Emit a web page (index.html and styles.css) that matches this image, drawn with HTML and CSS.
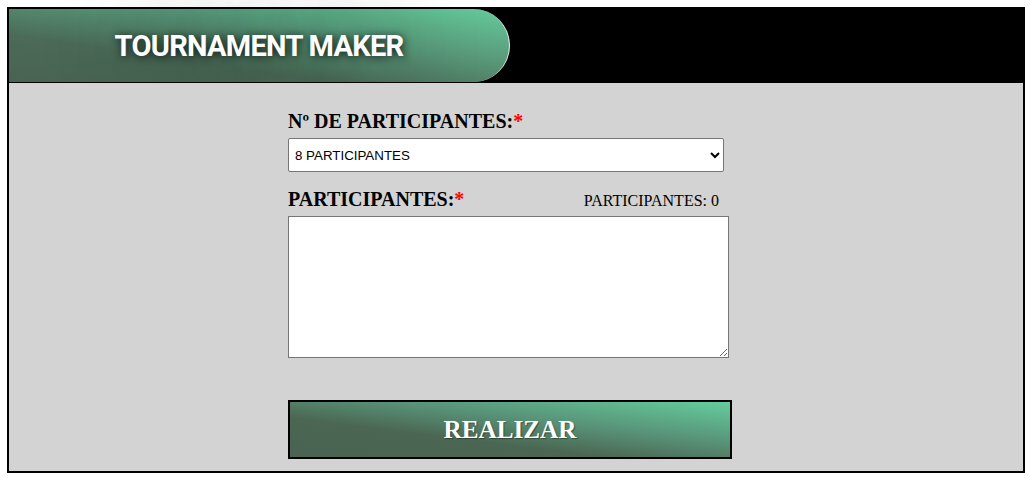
FILE: index.html
```html
<!DOCTYPE html>
<html lang="es">
<head>
<meta charset="utf-8">
<title>Tournament Maker</title>
<link rel="stylesheet" href="styles.css">
</head>
<body>
<div class="frame">
  <header class="topbar">
    <div class="pill"><h1 class="title">TOURNAMENT MAKER</h1></div>
  </header>
  <main class="content">
    <form class="form">
      <label class="label" for="num">Nº DE PARTICIPANTES:<span class="req">*</span></label>
      <select id="num" class="select">
        <option>8 PARTICIPANTES</option>
        <option>16 PARTICIPANTES</option>
        <option>32 PARTICIPANTES</option>
      </select>
      <div class="row">
        <label class="label" for="list">PARTICIPANTES:<span class="req">*</span></label>
        <span class="count">PARTICIPANTES: 0</span>
      </div>
      <textarea id="list" class="area"></textarea>
      <button type="button" class="btn">REALIZAR</button>
    </form>
  </main>
</div>
</body>
</html>
```
FILE: styles.css
```css
html, body {
  margin: 0;
  padding: 0;
  background: #ffffff;
}
.frame {
  margin: 7px;
  width: 1014px;
  border: 2px solid #000;
  display: flex;
  flex-direction: column;
}
.topbar {
  height: 74px;
  background: #000;
  display: flex;
  align-items: flex-start;
}
.pill {
  width: 500px;
  height: 73px;
  border-radius: 0 37px 37px 0;
  border-right: 1px solid #e8f5ee;
  background: linear-gradient(to top right, #4a6352 0%, #4b6a57 32%, #5a9c7c 66%, #64cb9c 100%);
  display: flex;
  align-items: center;
  justify-content: center;
}
.title {
  margin: 0;
  font-family: Roboto, "Liberation Sans", sans-serif;
  font-weight: 700;
  font-size: 29px;
  letter-spacing: -0.7px;
  color: #fff;
  text-shadow: 1px 1px 8px rgba(0,0,0,0.85), 0 0 80px rgba(0,0,0,0.5);
}
.content {
  height: 388px;
  background: #d2d3d2;
  padding: 27px 0 0 279px;
  box-sizing: border-box;
}
.form {
  width: 436px;
  display: flex;
  flex-direction: column;
}
.label {
  font-family: "Liberation Serif", "Times New Roman", serif;
  font-weight: 700;
  font-size: 20px;
  color: #000;
  line-height: 22px;
}
.req {
  color: #ff0000;
}
.select {
  margin-top: 6px;
  width: 436px;
  height: 34px;
  font-family: "Liberation Sans", Arial, sans-serif;
  font-size: 13.33px;
  background: #fff;
  border: 1px solid #767676;
  border-radius: 2px;
  color: #000;
  padding: 0 2px;
}
.row {
  margin-top: 16px;
  display: flex;
  justify-content: space-between;
  align-items: baseline;
}
.count {
  font-family: "Liberation Serif", "Times New Roman", serif;
  font-size: 16px;
  color: #000;
  margin-right: 5px;
}
.area {
  margin-top: 6px;
  width: 435px;
  height: 136px;
  padding: 2px;
  border: 1px solid #767676;
  background: #fff;
  box-sizing: content-box;
  resize: vertical;
}
.btn {
  margin-top: 42px;
  width: 444px;
  height: 59px;
  border: 2px solid #000;
  background: linear-gradient(to top right, #4a6352 0%, #4b6652 35%, #589278 62%, #64cd9d 100%);
  color: #fff;
  font-family: "Liberation Serif", "Times New Roman", serif;
  font-weight: 700;
  font-size: 25.2px;
  text-shadow: 1px 1px 1px rgba(0,0,0,0.4);
  padding: 0;
  cursor: pointer;
}
```
